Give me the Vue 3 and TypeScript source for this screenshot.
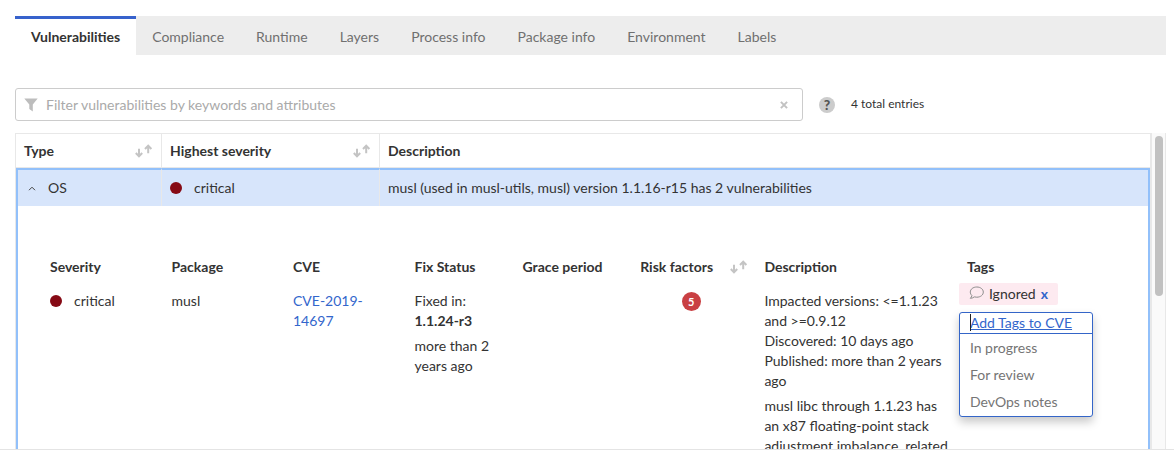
<script setup lang="ts">
import { ref } from 'vue'

const tabs = [
  'Vulnerabilities',
  'Compliance',
  'Runtime',
  'Layers',
  'Process info',
  'Package info',
  'Environment',
  'Labels',
]
const activeTab = ref('Vulnerabilities')
const filter = ref('')
const newTag = ref('')
const tagOptions = ['In progress', 'For review', 'DevOps notes']

interface Column {
  label: string
  key: string
  sortable?: boolean
}

const groupColumns: Column[] = [
  { label: 'Type', key: 'type', sortable: true },
  { label: 'Highest severity', key: 'severity', sortable: true },
  { label: 'Description', key: 'description' },
]

const detailColumns: Column[] = [
  { label: 'Severity', key: 'narrow' },
  { label: 'Package', key: 'narrow' },
  { label: 'CVE', key: 'narrow' },
  { label: 'Fix Status', key: 'fix' },
  { label: 'Grace period', key: 'grace' },
  { label: 'Risk factors', key: 'risk', sortable: true },
  { label: 'Description', key: 'text' },
  { label: 'Tags', key: 'tags' },
]

const sortPath = 'M4 4.800V12M0.800 9l3.200 3.300L7.200 9M13.200 9.200V2M10 5l3.200-3.300L16.400 5'
</script>

<template>
  <div class="page">
    <main class="content">
      <nav class="tabs" role="tablist">
        <button
          v-for="tab in tabs"
          :key="tab"
          type="button"
          role="tab"
          class="tab"
          :class="{ active: tab === activeTab }"
          :aria-selected="tab === activeTab"
          @click="activeTab = tab"
        >
          {{ tab }}
        </button>
      </nav>

      <div class="toolbar">
        <div class="search">
          <svg class="funnel" viewBox="0 0 14 14" aria-hidden="true">
            <path d="M0.3 0.5h13.4L8.8 6.6V13.6L5.3 11V6.6z" />
          </svg>
          <input
            v-model="filter"
            type="text"
            class="search-input"
            aria-label="Filter vulnerabilities"
            placeholder="Filter vulnerabilities by keywords and attributes"
          />
          <button type="button" class="clear" aria-label="Clear filter" @click="filter = ''">
            <svg viewBox="0 0 8 8" aria-hidden="true"><path d="M0.9 0.9l6.2 6.2M7.1 0.9L0.9 7.1" /></svg>
          </button>
        </div>
        <button type="button" class="help" aria-label="Filter help">?</button>
        <span class="total">4 total entries</span>
      </div>

      <div class="viewport">
        <div class="scroll">
          <table class="groups">
            <colgroup>
              <col v-for="c in groupColumns" :key="c.key" :class="'g-' + c.key" />
            </colgroup>
            <thead>
              <tr>
                <th v-for="c in groupColumns" :key="c.key" scope="col">
                  <div class="head">
                    <span>{{ c.label }}</span>
                    <button v-if="c.sortable" type="button" class="sort" :aria-label="'Sort by ' + c.label">
                      <svg viewBox="0 0 18 14" aria-hidden="true"><path :d="sortPath" /></svg>
                    </button>
                  </div>
                </th>
              </tr>
            </thead>
            <tbody>
              <tr class="group-row">
                <td>
                  <div class="type">
                    <button type="button" class="toggle" aria-label="Collapse OS" aria-expanded="true">
                      <svg viewBox="0 0 8 5" aria-hidden="true"><path d="M1 4.2l3-3 3 3" /></svg>
                    </button>
                    <span>OS</span>
                  </div>
                </td>
                <td>
                  <div class="severity"><i class="dot"></i><span>critical</span></div>
                </td>
                <td>musl (used in musl-utils, musl) version 1.1.16-r15 has 2 vulnerabilities</td>
              </tr>
              <tr class="detail-row">
                <td colspan="3">
                  <table class="details">
                    <colgroup>
                      <col v-for="c in detailColumns" :key="c.label" :class="'d-' + c.key" />
                    </colgroup>
                    <thead>
                      <tr>
                        <th v-for="c in detailColumns" :key="c.label" scope="col">
                          <div class="head">
                            <span>{{ c.label }}</span>
                            <button v-if="c.sortable" type="button" class="sort" :aria-label="'Sort by ' + c.label">
                              <svg viewBox="0 0 18 14" aria-hidden="true"><path :d="sortPath" /></svg>
                            </button>
                          </div>
                        </th>
                      </tr>
                    </thead>
                    <tbody>
                      <tr>
                        <td>
                          <div class="severity"><i class="dot"></i><span>critical</span></div>
                        </td>
                        <td>musl</td>
                        <td><a class="cve" href="#CVE-2019-14697">CVE-2019-14697</a></td>
                        <td>
                          <p>Fixed in:<br /><strong>1.1.24-r3</strong></p>
                          <p>more than 2 years ago</p>
                        </td>
                        <td></td>
                        <td class="risk"><span class="count">5</span></td>
                        <td>
                          <p>
                            Impacted versions: &lt;=1.1.23 and &gt;=0.9.12<br />
                            Discovered: 10 days ago<br />
                            Published: more than 2 years ago
                          </p>
                          <p>
                            musl libc through 1.1.23 has an x87 floating-point stack adjustment imbalance, related
                          </p>
                        </td>
                        <td class="tag-cell">
                          <span class="tag">
                            <svg class="bubble" viewBox="0 0 16 14" aria-hidden="true">
                              <path
                                d="M7.800 1C4.100 1 1.300 3.200 1.300 6.100c0 1.300 0.600 2.500 1.600 3.400-0.100 1.100-0.700 2.100-1.600 2.800 1.500 0 2.900-0.500 4-1.400 0.800 0.200 1.700 0.300 2.500 0.300 3.700 0 6.500-2.200 6.500-5.100S11.500 1 7.800 1z"
                              />
                            </svg>
                            <span>Ignored</span>
                            <button type="button" class="remove" aria-label="Remove tag Ignored">x</button>
                          </span>
                          <div class="picker">
                            <div class="picker-field">
                              <input
                                v-model="newTag"
                                type="text"
                                class="picker-input"
                                aria-label="Add Tags to CVE"
                                placeholder="Add Tags to CVE"
                              />
                              <i class="caret"></i>
                            </div>
                            <div class="options" role="listbox" aria-label="Tags">
                              <button
                                v-for="option in tagOptions"
                                :key="option"
                                type="button"
                                role="option"
                                class="option"
                                @click="newTag = option"
                              >
                                {{ option }}
                              </button>
                            </div>
                          </div>
                        </td>
                      </tr>
                    </tbody>
                  </table>
                </td>
              </tr>
            </tbody>
          </table>
        </div>
        <div class="track" aria-hidden="true"><div class="thumb"></div></div>
      </div>
    </main>
    <footer class="footer"></footer>
  </div>
</template>

<style>
body {
  margin: 0;
  background: #fff;
}
</style>

<style scoped>
.page {
  display: flex;
  flex-direction: column;
  height: 100vh;
  box-sizing: border-box;
  font-family: Lato, 'Open Sans', sans-serif;
  font-size: 14px;
  line-height: 20px;
  color: #333;
}

.page *,
.page *::before {
  box-sizing: border-box;
}

button,
input {
  margin: 0;
  padding: 0;
  border: 0;
  background: none;
  font: inherit;
  color: inherit;
  outline: none;
}

button {
  cursor: pointer;
}

svg {
  display: block;
}

p {
  margin: 0 0 5px;
}

.content {
  flex: 1;
  min-height: 0;
  display: flex;
  flex-direction: column;
  padding: 16px 8px 0 15px;
}

.footer {
  flex: none;
  height: 8px;
  border-top: 1px solid #e4e4e4;
}

.tabs {
  flex: none;
  display: flex;
  background: #ededed;
}

.tab {
  height: 39px;
  padding: 3px 16px 0;
  border-top: 0 solid #3762cc;
  color: #707070;
  white-space: nowrap;
}

.tab.active {
  padding-top: 0;
  border-top-width: 3px;
  background: #fff;
  color: #333;
  font-weight: 700;
}

.toolbar {
  flex: none;
  display: flex;
  align-items: center;
  margin: 33px 0 12px;
}

.search {
  flex: 0 1 788px;
  display: flex;
  align-items: center;
  height: 33px;
  padding: 0 14px 0 8px;
  border: 1px solid #ccc;
  border-radius: 3px;
}

.funnel {
  width: 14px;
  height: 14px;
  fill: #bdbdbd;
}

.search-input {
  flex: 1;
  min-width: 0;
  margin: 0 8px;
}

.search-input::placeholder {
  color: #aaa;
  opacity: 1;
}

.clear svg {
  width: 8px;
  height: 8px;
  fill: none;
  stroke: #c2c2c2;
  stroke-width: 2;
}

.help {
  width: 16px;
  height: 16px;
  margin: 0 16px;
  border-radius: 50%;
  background: #ccc;
  color: #555;
  font-size: 14px;
  font-weight: 900;
  line-height: 16px;
  text-align: center;
}

.total {
  padding-bottom: 2px;
  font-size: 12px;
}

.viewport {
  flex: 1;
  min-height: 0;
  display: flex;
}

.scroll {
  flex: 1;
  min-width: 0;
  overflow: hidden;
  border: solid #e8e8e8;
  border-width: 1px 2px 0 1px;
}

.track {
  flex: none;
  width: 14px;
  padding: 3px 2px 0 3px;
  background: #fafafa;
  border-right: 1px solid #e8e8e8;
}

.thumb {
  height: 51%;
  border-radius: 4px;
  background: #c1c1c1;
}

table {
  width: 100%;
  border-collapse: separate;
  border-spacing: 0;
  table-layout: fixed;
}

th,
td {
  padding: 0 8px;
  text-align: left;
  font-weight: 400;
}

th {
  font-weight: 700;
}

.g-type {
  width: 145px;
}

.g-severity {
  width: 218px;
}

.groups > thead th {
  height: 34px;
  border-bottom: 1px solid #e8e8e8;
}

.groups > thead th + th,
.group-row td + td {
  border-left: 1px solid #e8e8e8;
}

.head {
  display: flex;
  align-items: center;
  justify-content: space-between;
}

.sort svg {
  width: 18px;
  height: 14px;
  fill: none;
  stroke: #c4c4c4;
  stroke-width: 2;
}

.group-row td {
  height: 38px;
  border-top: 2px solid #92c0fa;
  background: #d7e5fb;
}

.group-row td:first-child {
  padding-left: 10px;
  border-left: 2px solid #92c0fa;
}

.group-row td:last-child {
  border-right: 2px solid #92c0fa;
}

.type {
  display: flex;
  align-items: center;
  gap: 12px;
}

.toggle svg {
  width: 8px;
  height: 5px;
  fill: none;
  stroke: #444;
  stroke-width: 1;
}

.severity {
  display: flex;
  align-items: center;
  gap: 12px;
}

.dot {
  width: 12px;
  height: 12px;
  border-radius: 50%;
  background: #860a15;
}

.detail-row > td {
  padding: 43px 26px 20px 24px;
  border: solid #92c0fa;
  border-width: 0 2px;
}

.d-narrow {
  width: 11.25%;
}

.d-fix {
  width: 10%;
}

.d-grace {
  width: 10.9%;
}

.d-risk {
  width: 11.5%;
}

.d-text {
  width: 18.75%;
}

.details th {
  height: 34px;
  padding-top: 2px;
}

.details td {
  padding: 8px;
  vertical-align: top;
}

.cve {
  color: #3366cc;
  text-decoration: none;
}

.details .risk {
  padding-right: 14px;
  text-align: center;
}

.count {
  display: inline-block;
  width: 19px;
  height: 19px;
  border-radius: 50%;
  background: #c94043;
  color: #fff;
  font-size: 11px;
  font-weight: 700;
  line-height: 19px;
}

.details .tag-cell {
  padding: 0;
}

.tag {
  display: flex;
  align-items: center;
  width: fit-content;
  height: 22px;
  padding: 0 10px;
  border-radius: 2px;
  background: #fdeaf0;
}

.bubble {
  width: 16px;
  height: 14px;
  margin: 0 4px 2px 0;
  fill: none;
  stroke: #8c8c8c;
  stroke-width: 1;
}

.remove {
  margin-left: 5px;
  color: #3366cc;
  font-weight: 700;
}

.picker {
  width: 134px;
  margin-top: 7px;
  border: 1px solid #3465c8;
  border-radius: 3px;
  background: #fff;
  box-shadow: 0 5px 10px rgba(0, 0, 0, 0.22);
}

.picker-field {
  position: relative;
  height: 21px;
  border-bottom: 1px solid #3465c8;
}

.picker-input {
  display: block;
  width: 100%;
  height: 20px;
  padding: 0 10px;
}

.picker-input::placeholder {
  color: #3366cc;
  opacity: 1;
  text-decoration: underline;
}

.caret {
  position: absolute;
  top: 1px;
  left: 10px;
  width: 1px;
  height: 17px;
  background: #222;
}

.options {
  display: flex;
  flex-direction: column;
  padding-bottom: 1px;
}

.option {
  height: 27px;
  padding: 0 10px;
  color: #757575;
  text-align: left;
}
</style>
